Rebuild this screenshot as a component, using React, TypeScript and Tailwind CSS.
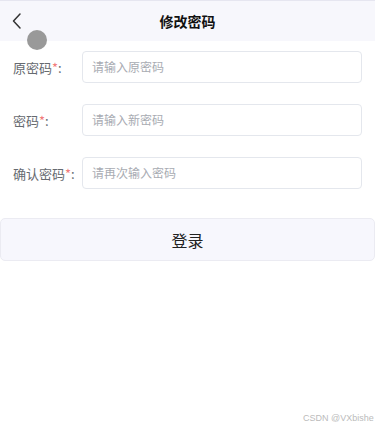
import React from "react";

const font = { fontFamily: '"Noto Sans CJK SC", "Noto Sans", sans-serif' };

function Row({ label, placeholder }: { label: string; placeholder: string }) {
  return (
    <div className="flex items-center h-[32px]">
      <div className="w-[82px] pl-[13px] text-[13px] text-[#666a70] leading-none">
        {label}
        <span className="text-[#f27b7b]">*</span>:
      </div>
      <div className="flex-1 mr-[13px] h-[32px] border border-[#e4e7ed] rounded-[4px] flex items-center pl-[9px] text-[12px] text-[#a8abb2] bg-white">
        {placeholder}
      </div>
    </div>
  );
}

export default function App() {
  return (
    <div className="w-[375px] h-[430px] bg-white relative overflow-hidden" style={font}>
      <div className="h-[41px] bg-[#f7f7fc] border-t border-[#e6e6f0] flex items-center relative">
        <svg className="absolute left-[11px] top-[11px]" width="12" height="18" viewBox="0 0 12 18" fill="none">
          <path d="M9 2 L2.5 9 L9 16" stroke="#333" strokeWidth="1.5" strokeLinecap="round" strokeLinejoin="round" />
        </svg>
        <div className="w-full text-center text-[14px] font-bold text-[#111]">修改密码</div>
      </div>
      <div className="absolute left-[27px] top-[30px] w-[20px] h-[20px] rounded-full bg-[#999]" />
      <div className="flex flex-col gap-[21px] pt-[10px]">
        <Row label="原密码" placeholder="请输入原密码" />
        <Row label="密码" placeholder="请输入新密码" />
        <Row label="确认密码" placeholder="请再次输入密码" />
      </div>
      <div className="mt-[29px] h-[43px] bg-[#f7f7fd] border border-[#ebebf2] rounded-[5px] flex items-center justify-center text-[16px] text-[#222]">
        登录
      </div>
      <div className="absolute left-[303px] top-[412px] whitespace-nowrap text-[9px] text-[#bbb]" style={{ fontFamily: '"Liberation Sans", sans-serif' }}>
        CSDN @VXbishe
      </div>
    </div>
  );
}
